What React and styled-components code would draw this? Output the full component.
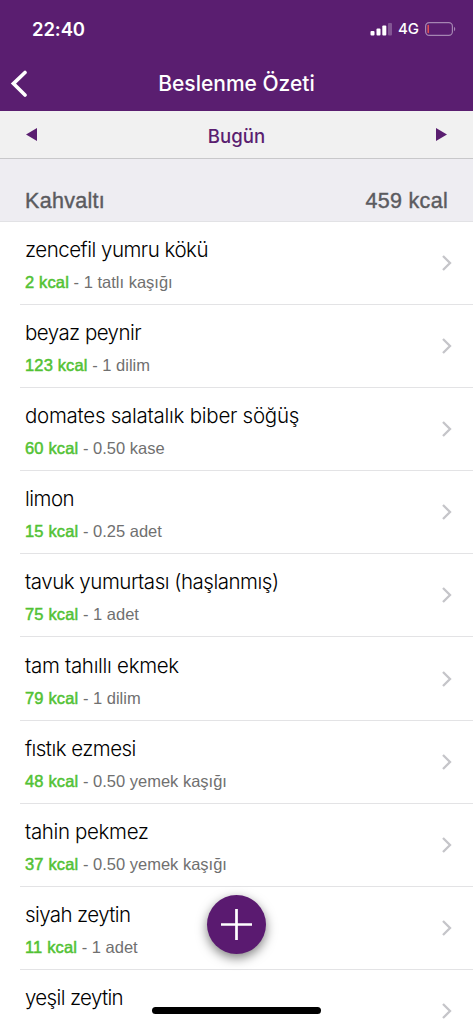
import React from 'react';
import styled, { createGlobalStyle } from 'styled-components';

const GlobalStyle = createGlobalStyle`
  * {
    box-sizing: border-box;
  }

  body {
    margin: 0;
    background: #ffffff;
    overflow: hidden;
  }
`;

const Screen = styled.div`
  position: relative;
  display: flex;
  flex-direction: column;
  height: 1024px;
  overflow: hidden;
  background: #ffffff;
  font-family: 'Liberation Sans', Arial, sans-serif;
`;

const Header = styled.header`
  flex: none;
  height: 111px;
  background: #5a1e70;
  color: #ffffff;
  font-family: Inter, sans-serif;
`;

const StatusBar = styled.div`
  display: flex;
  align-items: center;
  justify-content: space-between;
  height: 58px;
  padding: 0 17px 0 32px;
`;

const Time = styled.span`
  font-size: 18.5px;
  font-weight: 600;
  letter-spacing: -0.1px;
`;

const StatusIcons = styled.div`
  display: flex;
  align-items: center;
  gap: 6px;
`;

const Network = styled.span`
  font-size: 15px;
  font-weight: 500;
  line-height: 20px;
`;

const NavBar = styled.div`
  display: grid;
  grid-template-columns: 60px 1fr 60px;
  align-items: center;
  height: 51px;
`;

const BackButton = styled.button`
  display: flex;
  padding: 0 0 0 9.5px;
  border: none;
  background: none;
  color: inherit;
`;

const Title = styled.h1`
  margin: 0;
  font-size: 21px;
  font-weight: 500;
  line-height: 26px;
  text-align: center;
`;

const DayBar = styled.div`
  flex: none;
  display: flex;
  align-items: center;
  justify-content: space-between;
  height: 48px;
  padding: 0 26px;
  border-bottom: 1px solid #c8c8ca;
  background: #f1f1f1;
  color: #5a1e70;
`;

const Day = styled.span`
  padding-top: 2px;
  font-family: Inter, sans-serif;
  font-size: 18.6px;
  font-weight: 500;
`;

const DayButton = styled.button`
  display: flex;
  padding: 0;
  border: none;
  background: none;
  color: inherit;
`;

const MealHeader = styled.div`
  flex: none;
  display: flex;
  justify-content: space-between;
  height: 62.5px;
  padding: 29px 25px 0;
  border-bottom: 1px solid #e2e2e5;
  background: #eeedf2;
  color: #5b5b5f;
  font-size: 21.5px;
  line-height: 26px;
  letter-spacing: 0.3px;
  -webkit-text-stroke: 0.4px #5b5b5f;
`;

const FoodList = styled.ul`
  margin: 0;
  padding: 0;
  list-style: none;
`;

const FoodRow = styled.li`
  display: flex;
  align-items: center;
  justify-content: space-between;
  height: 83.2px;
  margin-left: 20px;
  padding: 0 20px 0 5px;
  border-bottom: 1px solid #e3e3e5;
`;

const FoodText = styled.div`
  padding-top: 7px;
`;

const FoodName = styled.div`
  color: #000000;
  font-family: Inter, sans-serif;
  font-size: 20.5px;
  font-weight: 300;
  line-height: 26px;
  letter-spacing: ${({ $tracking }) => $tracking}px;
`;

const FoodDetail = styled.div`
  margin: 6px 0 1px;
  color: #707070;
  font-size: 16.5px;
  line-height: 26px;
`;

const Calories = styled.span`
  color: #52c234;
  letter-spacing: 0.15px;
  -webkit-text-stroke: 0.5px #52c234;
`;

const AddButton = styled.button`
  position: absolute;
  left: 207px;
  top: 895px;
  display: flex;
  align-items: center;
  justify-content: center;
  width: 59px;
  height: 59px;
  padding: 0;
  border: none;
  border-radius: 50%;
  background: #5a1a70;
  box-shadow: 0 4px 11px rgba(0, 0, 0, 0.5);
`;

const HomeIndicator = styled.div`
  position: absolute;
  left: 152px;
  bottom: 10px;
  width: 169px;
  height: 7px;
  border-radius: 4px;
  background: #000000;
`;

const foods = [
  { name: 'zencefil yumru kökü', tracking: -0.5, kcal: 2, amount: '1 tatlı kaşığı' },
  { name: 'beyaz peynir', tracking: -0.55, kcal: 123, amount: '1 dilim' },
  { name: 'domates salatalık biber söğüş', tracking: -0.26, kcal: 60, amount: '0.50 kase' },
  { name: 'limon', tracking: -0.5, kcal: 15, amount: '0.25 adet' },
  { name: 'tavuk yumurtası (haşlanmış)', tracking: -0.48, kcal: 75, amount: '1 adet' },
  { name: 'tam tahıllı ekmek', tracking: -0.3, kcal: 79, amount: '1 dilim' },
  { name: 'fıstık ezmesi', tracking: -0.53, kcal: 48, amount: '0.50 yemek kaşığı' },
  { name: 'tahin pekmez', tracking: -0.35, kcal: 37, amount: '0.50 yemek kaşığı' },
  { name: 'siyah zeytin', tracking: -0.6, kcal: 11, amount: '1 adet' },
  { name: 'yeşil zeytin', tracking: -0.65 },
];

const SignalIcon = () => (
  <svg width="22" height="14" viewBox="0 0 22 14" fill="#ffffff">
    <rect x="0.5" y="9" width="4" height="4.5" rx="1" />
    <rect x="6.5" y="6.5" width="4" height="7" rx="1" />
    <rect x="12.3" y="3.5" width="4" height="10" rx="1" />
    <rect x="18" y="1" width="4" height="12.5" rx="1" opacity="0.25" />
  </svg>
);

const BatteryIcon = () => (
  <svg width="31" height="14" viewBox="0 0 31 14" fill="none">
    <rect x="0.6" y="0.6" width="26.8" height="12.8" rx="3.6" stroke="#a585b2" strokeWidth="1.2" />
    <rect x="2.5" y="2.8" width="1.4" height="8.4" rx="0.7" fill="#f0544f" />
    <path d="M29 4.8c1.7.7 1.7 3.7 0 4.4z" fill="#a585b2" />
  </svg>
);

const BackIcon = () => (
  <svg width="18" height="28" viewBox="0 0 18 28" fill="none">
    <path d="M15 2.5L3.4 13.6l11.6 11.4" stroke="#ffffff" strokeWidth="3.6" strokeLinecap="round" strokeLinejoin="miter" />
  </svg>
);

const ChevronIcon = () => (
  <svg width="12" height="18" viewBox="0 0 12 18" fill="none">
    <path d="M2 2l7 7-7 7" stroke="#c5c5c9" strokeWidth="2.3" />
  </svg>
);

const PlusIcon = () => (
  <svg width="31" height="31" viewBox="0 0 31 31" fill="none">
    <path d="M15.5 0v31M0 15.5h31" stroke="#ffffff" strokeWidth="2.7" />
  </svg>
);

const App = () => {
  return (
    <>
      <GlobalStyle />
      <Screen>
        <Header>
          <StatusBar>
            <Time>22:40</Time>
            <StatusIcons>
              <SignalIcon />
              <Network>4G</Network>
              <BatteryIcon />
            </StatusIcons>
          </StatusBar>
          <NavBar>
            <BackButton aria-label="Geri">
              <BackIcon />
            </BackButton>
            <Title>Beslenme Özeti</Title>
          </NavBar>
        </Header>

        <DayBar>
          <DayButton>
            <svg width="11" height="13" viewBox="0 0 11 13">
              <path d="M11 0v13L0 6.5z" fill="currentColor" />
            </svg>
          </DayButton>
          <Day>Bugün</Day>
          <DayButton>
            <svg width="11" height="13" viewBox="0 0 11 13">
              <path d="M0 0v13l11-6.5z" fill="currentColor" />
            </svg>
          </DayButton>
        </DayBar>

        <MealHeader>
          <span>Kahvaltı</span>
          <span>459 kcal</span>
        </MealHeader>

        <FoodList>
          {foods.map((food) => (
            <FoodRow key={food.name}>
              <FoodText>
                <FoodName $tracking={food.tracking}>{food.name}</FoodName>
                <FoodDetail>
                  {food.amount ? (
                    <>
                      <Calories>{food.kcal} kcal</Calories> - {food.amount}
                    </>
                  ) : (
                    <>&nbsp;</>
                  )}
                </FoodDetail>
              </FoodText>
              <ChevronIcon />
            </FoodRow>
          ))}
        </FoodList>

        <AddButton aria-label="Ekle">
          <PlusIcon />
        </AddButton>
        <HomeIndicator />
      </Screen>
    </>
  );
};

export default App;
